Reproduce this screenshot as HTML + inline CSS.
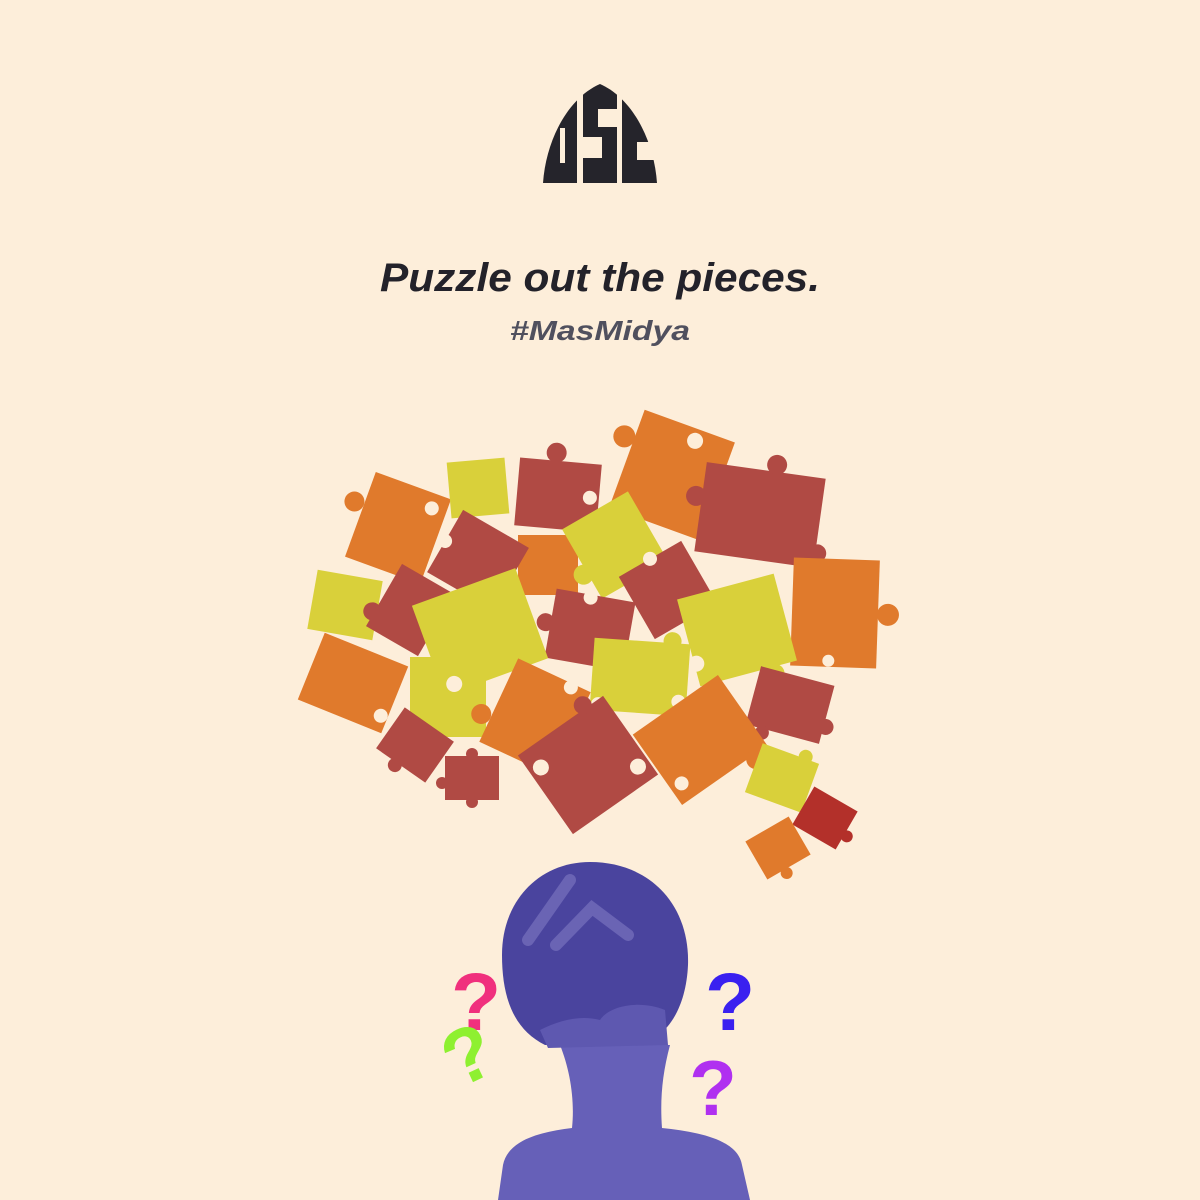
<!DOCTYPE html>
<html><head><meta charset="utf-8"><style>
html,body{margin:0;padding:0;background:#fdeeda;}
svg{display:block}
</style></head><body>
<svg width="1200" height="1200" viewBox="0 0 1200 1200" xmlns="http://www.w3.org/2000/svg">
<rect width="1200" height="1200" fill="#fdeeda"/>
<!-- logo -->
<path d="M600 84 C632 98 654 140 657 183 L543 183 C546 140 568 98 600 84 Z" fill="#25242b"/>
<g fill="#fdeeda">
<rect x="577" y="80" width="6" height="105"/>
<rect x="617" y="80" width="5" height="105"/>
<rect x="560" y="128" width="5" height="35"/>
<rect x="598" y="109" width="19" height="18"/>
<rect x="583" y="137" width="19" height="21"/>
<rect x="637" y="142" width="21" height="18"/>
</g>
<text x="600" y="291" text-anchor="middle" font-family="Liberation Sans, sans-serif" font-style="italic" font-weight="bold" font-size="40" fill="#23222a" textLength="440" lengthAdjust="spacingAndGlyphs">Puzzle out the pieces.</text>
<text x="600" y="340" text-anchor="middle" font-family="Liberation Sans, sans-serif" font-style="italic" font-weight="bold" font-size="28" fill="#50505e" textLength="180" lengthAdjust="spacingAndGlyphs">#MasMidya</text>
<!-- puzzle pieces -->
<g>
<g transform="translate(672,475) rotate(20)" fill="#e07a2c"><rect x="-48" y="-52" width="96" height="104"/><circle cx="-58" cy="-20" r="11"/><circle cx="10" cy="-40" r="8" fill="#fdeeda"/></g>
<g transform="translate(398,528) rotate(20)" fill="#e07a2c"><rect x="-40" y="-45" width="80" height="90"/><circle cx="-50" cy="-10" r="10"/><circle cx="25" cy="-30" r="7" fill="#fdeeda"/></g>
<g transform="translate(478,488) rotate(-5)" fill="#d9d03a"><rect x="-29" y="-28" width="58" height="56"/></g>
<g transform="translate(558,495) rotate(5)" fill="#b04a44"><rect x="-41" y="-34" width="82" height="68"/><circle cx="-5" cy="-42" r="10"/><circle cx="32" cy="0" r="7" fill="#fdeeda"/></g>
<g transform="translate(760,515) rotate(8)" fill="#b04a44"><rect x="-60" y="-45" width="120" height="90"/><circle cx="10" cy="-52" r="10"/><circle cx="-66" cy="-10" r="10"/><circle cx="62" cy="30" r="9"/></g>
<g transform="translate(548,565)" fill="#e07a2c"><rect x="-30" y="-30" width="60" height="60"/></g>
<g transform="translate(478,560) rotate(30)" fill="#b04a44"><rect x="-38" y="-36" width="76" height="72"/><circle cx="-38" cy="0" r="7" fill="#fdeeda"/></g>
<g transform="translate(615,545) rotate(-30)" fill="#d9d03a"><rect x="-38" y="-40" width="76" height="80"/><circle cx="-42" cy="10" r="10"/></g>
<g transform="translate(668,590) rotate(-30)" fill="#b04a44"><rect x="-36" y="-36" width="72" height="72"/><circle cx="0" cy="-36" r="7" fill="#fdeeda"/></g>
<g transform="translate(835,613) rotate(2)" fill="#e07a2c"><rect x="-43" y="-54" width="86" height="108"/><circle cx="53" cy="0" r="11"/><circle cx="-5" cy="48" r="6" fill="#fdeeda"/></g>
<g transform="translate(345,605) rotate(10)" fill="#d9d03a"><rect x="-33" y="-30" width="66" height="60"/><circle cx="33" cy="0" r="8"/></g>
<g transform="translate(410,610) rotate(30)" fill="#b04a44"><rect x="-30" y="-36" width="60" height="72"/><circle cx="-32" cy="20" r="9"/></g>
<g transform="translate(737,630) rotate(-15)" fill="#d9d03a"><rect x="-50" y="-45" width="100" height="90"/><circle cx="25" cy="52" r="10"/><circle cx="-48" cy="22" r="8" fill="#fdeeda"/></g>
<g transform="translate(590,630) rotate(10)" fill="#b04a44"><rect x="-40" y="-35" width="80" height="70"/><circle cx="-45" cy="0" r="9"/><circle cx="-5" cy="-32" r="7" fill="#fdeeda"/></g>
<g transform="translate(448,697)" fill="#d9d03a"><rect x="-38" y="-40" width="76" height="80"/></g>
<g transform="translate(480,632) rotate(-20)" fill="#d9d03a"><rect x="-55" y="-48" width="110" height="96"/><circle cx="-42" cy="40" r="8" fill="#fdeeda"/></g>
<g transform="translate(353,683) rotate(22)" fill="#e07a2c"><rect x="-45" y="-36" width="90" height="72"/><circle cx="38" cy="20" r="7" fill="#fdeeda"/></g>
<g transform="translate(640,677) rotate(4)" fill="#d9d03a"><rect x="-48" y="-36" width="96" height="72"/><circle cx="30" cy="-38" r="9"/><circle cx="-40" cy="30" r="7" fill="#fdeeda"/><circle cx="40" cy="22" r="7" fill="#fdeeda"/></g>
<g transform="translate(535,717) rotate(25)" fill="#e07a2c"><rect x="-40" y="-46" width="80" height="92"/><circle cx="-50" cy="20" r="10"/><circle cx="20" cy="-42" r="7" fill="#fdeeda"/></g>
<g transform="translate(790,705) rotate(15)" fill="#b04a44"><rect x="-38" y="-30" width="76" height="60"/><circle cx="40" cy="12" r="8"/><circle cx="-20" cy="34" r="7"/></g>
<g transform="translate(700,740) rotate(-35)" fill="#e07a2c"><rect x="-52" y="-43" width="104" height="86"/><circle cx="35" cy="48" r="10"/><circle cx="-40" cy="25" r="7" fill="#fdeeda"/></g>
<g transform="translate(415,745) rotate(35)" fill="#b04a44"><rect x="-30" y="-25" width="60" height="50"/><circle cx="-5" cy="28" r="7"/></g>
<g transform="translate(588,765) rotate(-35)" fill="#b04a44"><rect x="-52" y="-48" width="104" height="96"/><circle cx="-40" cy="-25" r="8" fill="#fdeeda"/><circle cx="40" cy="30" r="8" fill="#fdeeda"/><circle cx="30" cy="-52" r="9"/></g>
<g transform="translate(472,778)" fill="#b04a44"><rect x="-27" y="-22" width="54" height="44"/><circle cx="0" cy="-24" r="6"/><circle cx="-30" cy="5" r="6"/><circle cx="0" cy="24" r="6"/></g>
<g transform="translate(782,778) rotate(20)" fill="#d9d03a"><rect x="-30" y="-26" width="60" height="52"/><circle cx="15" cy="-28" r="7"/></g>
<g transform="translate(825,818) rotate(30)" fill="#b3302a"><rect x="-25" y="-22" width="50" height="44"/><circle cx="28" cy="5" r="6"/></g>
<g transform="translate(778,848) rotate(-30)" fill="#e07a2c"><rect x="-25" y="-22" width="50" height="44"/><circle cx="-5" cy="26" r="6"/></g>
</g>
<!-- person -->
<path d="M498 1200 L503 1165 C508 1140 540 1132 572 1128 C575 1100 570 1070 560 1045 L670 1045 C662 1075 660 1100 662 1128 C700 1132 738 1140 742 1165 L750 1200 Z" fill="#6660b8"/>
<path d="M590 862 C650 862 690 905 688 965 C686 1010 665 1040 640 1042 L545 1045 C515 1030 502 1000 502 955 C502 900 540 862 590 862 Z" fill="#4a449e"/>
<path d="M540 1030 C560 1020 580 1015 600 1020 C610 1005 640 1000 665 1010 L668 1045 L548 1048 Z" fill="#5e58b0"/>
<path d="M528 940 L570 880" stroke="#6a64b4" stroke-width="12" stroke-linecap="round"/>
<path d="M556 945 L592 908 L628 935" stroke="#6a64b4" stroke-width="12" stroke-linecap="round" fill="none"/>
<!-- question marks -->
<g font-family="Liberation Sans, sans-serif" font-weight="bold" text-anchor="middle">
<text x="476" y="1030" font-size="82" fill="#f0307d">?</text>
<text x="466" y="1082" font-size="78" fill="#8ef030" transform="rotate(-25 466 1050)">?</text>
<text x="730" y="1030" font-size="82" fill="#3a20f0">?</text>
<text x="713" y="1115" font-size="78" fill="#b030f0">?</text>
</g>
</svg>
</body></html>
